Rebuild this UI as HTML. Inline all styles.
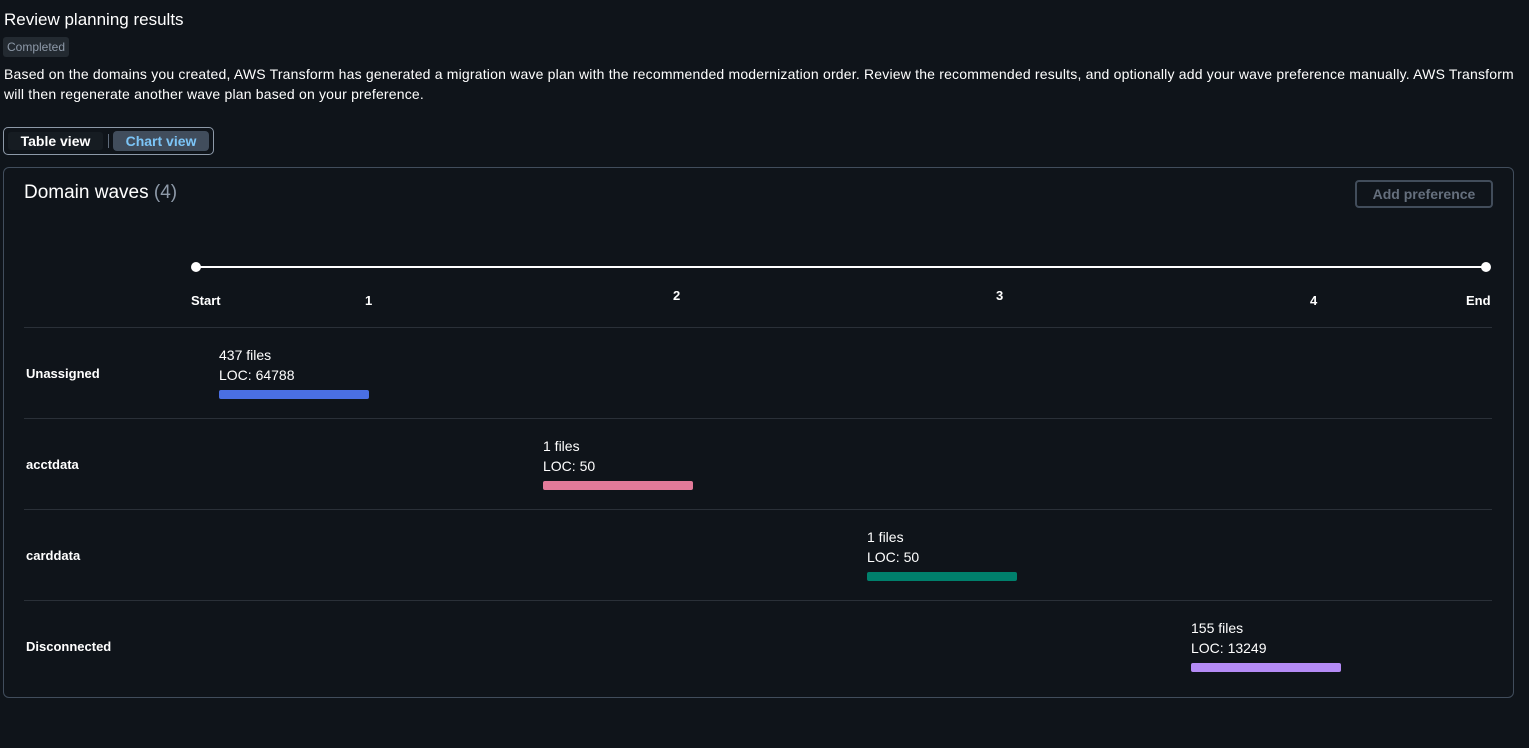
<!DOCTYPE html>
<html><head><style>
body{margin:0;background:#0f141a;font-family:"Liberation Sans",sans-serif;color:#fff;width:1529px;height:748px;overflow:hidden;position:relative}
.a{position:absolute;white-space:nowrap}
.b{font-weight:bold;font-size:13px}
.bar{position:absolute;height:9px;width:150px;border-radius:2px}
.sep{position:absolute;left:24px;width:1468px;height:1px;background:#2a3038}
.t{font-size:14px;line-height:20px}
</style></head><body>
<div class="a" style="left:4px;top:10px;font-size:17px">Review planning results</div>
<div class="a" style="left:3px;top:37px;height:20px;padding:0 4px;background:#232a31;border-radius:3px;color:#8d99a8;font-size:12px;line-height:20px">Completed</div>
<div class="a t" style="left:4px;top:64px;letter-spacing:0.19px">Based on the domains you created, AWS Transform has generated a migration wave plan with the recommended modernization order. Review the recommended results, and optionally add your wave preference manually. AWS Transform</div>
<div class="a t" style="left:4px;top:84px;letter-spacing:0.19px">will then regenerate another wave plan based on your preference.</div>
<div class="a" style="left:3px;top:127px;width:209px;height:26px;border:1px solid #8d99a8;border-radius:5px"></div>
<div class="a b" style="left:8px;top:132px;width:95px;height:18px;background:#161c22;border-radius:3px;font-size:14px;line-height:18px;text-align:center">Table view</div>
<div class="a" style="left:108px;top:134px;width:1px;height:14px;background:#5f6b7a"></div>
<div class="a b" style="left:113px;top:131px;width:96px;height:20px;background:#414d5c;border-radius:4px;color:#7cc5f7;font-size:14px;line-height:20px;text-align:center">Chart view</div>
<div class="a" style="left:3px;top:167px;width:1509px;height:529px;border:1px solid #414d5c;border-radius:6px"></div>
<div class="a" style="left:24px;top:182px;font-size:19px">Domain waves <span style="color:#8d99a8">(4)</span></div>
<div class="a b" style="left:1355px;top:180px;width:134px;height:24px;border:2px solid #424d5b;border-radius:4px;color:#656f7d;font-size:14px;line-height:24px;text-align:center">Add preference</div>
<div class="a" style="left:196px;top:266px;width:1290px;height:2px;background:#fff"></div>
<div class="a" style="left:191px;top:262px;width:10px;height:10px;border-radius:50%;background:#fff"></div>
<div class="a" style="left:1481px;top:262px;width:10px;height:10px;border-radius:50%;background:#fff"></div>
<div class="a b" style="left:191px;top:293px">Start</div>
<div class="a b" style="left:365px;top:293px">1</div>
<div class="a b" style="left:673px;top:288px">2</div>
<div class="a b" style="left:996px;top:288px">3</div>
<div class="a b" style="left:1310px;top:293px">4</div>
<div class="a b" style="left:1466px;top:293px">End</div>
<div class="sep" style="top:327px"></div>
<div class="sep" style="top:418px"></div>
<div class="sep" style="top:509px"></div>
<div class="sep" style="top:600px"></div>
<div class="a b" style="left:26px;top:366px">Unassigned</div>
<div class="a b" style="left:26px;top:457px">acctdata</div>
<div class="a b" style="left:26px;top:548px">carddata</div>
<div class="a b" style="left:26px;top:639px">Disconnected</div>
<div class="a t" style="left:219px;top:345px">437 files<br>LOC: 64788</div>
<div class="bar" style="left:219px;top:390px;background:#4a6fe3"></div>
<div class="a t" style="left:543px;top:436px">1 files<br>LOC: 50</div>
<div class="bar" style="left:543px;top:481px;background:#e27a99"></div>
<div class="a t" style="left:867px;top:527px">1 files<br>LOC: 50</div>
<div class="bar" style="left:867px;top:572px;background:#00806c"></div>
<div class="a t" style="left:1191px;top:618px">155 files<br>LOC: 13249</div>
<div class="bar" style="left:1191px;top:663px;background:#b48bf5"></div>
</body></html>
